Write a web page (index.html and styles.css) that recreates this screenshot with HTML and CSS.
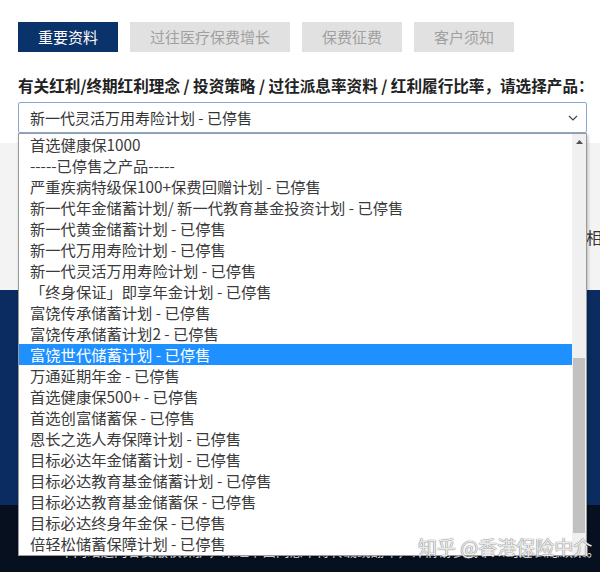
FILE: index.html
```html
<!DOCTYPE html>
<html>

<head>
    <title>重要资料</title>
    <link rel="stylesheet" href="styles.css">
</head>

<body>

    <div class="page">
        <section class="top">
            <div class="tabs">
                <div class="tab active">重要资料</div>
                <div class="tab">过往医疗保费增长</div>
                <div class="tab">保费征费</div>
                <div class="tab">客户须知</div>
            </div>

            <h3 class="heading">有关红利/终期红利理念 / 投资策略 / 过往派息率资料 / 红利履行比率，请选择产品：</h3>

            <div class="picker">
                <div class="select">
                    <span>新一代灵活万用寿险计划 - 已停售</span>
                    <svg class="chevron" width="10" height="6" viewBox="0 0 10 6">
                        <path d="M1 1 L5 5 L9 1" fill="none" stroke="#444" stroke-width="1.2"/>
                    </svg>
                </div>

                <div class="dropdown">
                    <ul class="options">
                        <li>首选健康保1000</li>
                        <li>-----已停售之产品-----</li>
                        <li>严重疾病特级保100+保费回赠计划 - 已停售</li>
                        <li>新一代年金储蓄计划/ 新一代教育基金投资计划 - 已停售</li>
                        <li>新一代黄金储蓄计划 - 已停售</li>
                        <li>新一代万用寿险计划 - 已停售</li>
                        <li>新一代灵活万用寿险计划 - 已停售</li>
                        <li>「终身保证」即享年金计划 - 已停售</li>
                        <li>富饶传承储蓄计划 - 已停售</li>
                        <li>富饶传承储蓄计划2 - 已停售</li>
                        <li class="selected">富饶世代储蓄计划 - 已停售</li>
                        <li>万通延期年金 - 已停售</li>
                        <li>首选健康保500+ - 已停售</li>
                        <li>首选创富储蓄保 - 已停售</li>
                        <li>恩长之选人寿保障计划 - 已停售</li>
                        <li>目标必达年金储蓄计划 - 已停售</li>
                        <li>目标必达教育基金储蓄计划 - 已停售</li>
                        <li>目标必达教育基金储蓄保 - 已停售</li>
                        <li>目标必达终身年金保 - 已停售</li>
                        <li>倍轻松储蓄保障计划 - 已停售</li>
                    </ul>
                    <div class="scrollbar">
                        <svg class="arrow" width="7" height="4" viewBox="0 0 7 4">
                            <path d="M0 4 L3.5 0 L7 4 Z" fill="#505050"/>
                        </svg>
                        <div class="thumb"></div>
                    </div>
                </div>
            </div>
        </section>

        <section class="note">
            <p>本网页所载资料只供参考之用，并不构成任何投资建议。如欲了解详情，请参阅相关产品说明书。</p>
        </section>

        <section class="band"></section>

        <footer class="foot">
            <p>本网站之内容受版权保护，未经书面同意不得转载或翻印，详情请参阅本公司之私隐政策。</p>
        </footer>

        <div class="watermark">知乎 @香港保险中介</div>
    </div>

</body>

</html>
```

FILE: styles.css
```css
body {
    margin: 0;
    background-color: #fff;
    font-family: "Noto Sans CJK SC", "Noto Sans", sans-serif;
    color: #333;
}

.page {
    position: relative;
    width: 600px;
    overflow: hidden;
}

.top {
    padding: 22px 13px 10px 18px;
    background-color: #fff;
}

.tabs {
    display: flex;
    gap: 12px;
}

.tab {
    height: 30px;
    line-height: 30px;
    padding: 0 20px;
    font-size: 15px;
    background-color: #e1e1e1;
    color: #a0a0a0;
}

.tab.active {
    background-color: #0b336b;
    color: #fff;
}

.heading {
    margin: 22px 0 0;
    font-size: 15.6px;
    line-height: 22px;
    font-weight: bold;
    color: #222;
    white-space: nowrap;
}

.picker {
    position: relative;
    margin-top: 6px;
}

.select {
    display: flex;
    align-items: center;
    justify-content: space-between;
    height: 29px;
    padding: 0 8px 0 11px;
    border: 1px solid #86a9d6;
    border-radius: 2px;
    font-size: 15px;
}

.dropdown {
    position: absolute;
    top: 31px;
    left: 0;
    width: 567px;
    height: 421px;
    display: flex;
    background-color: #fff;
    border: 1px solid #9a9a9a;
    box-shadow: 1px 2px 3px rgba(0, 0, 0, 0.25);
    z-index: 2;
}

.options {
    flex: 1;
    margin: 0;
    padding: 0;
    list-style: none;
}

.options li {
    height: 21px;
    line-height: 21px;
    padding-left: 11px;
    font-size: 15.3px;
    color: #3a3a3a;
    white-space: nowrap;
}

.options li.selected {
    background-color: #1e90ff;
    color: #fff;
}

.scrollbar {
    position: relative;
    width: 14px;
    background-color: #f0f0f0;
}

.arrow {
    position: absolute;
    top: 6px;
    left: 4px;
}

.thumb {
    position: absolute;
    top: 224px;
    left: 1px;
    width: 12px;
    height: 175px;
    background-color: #c1c1c1;
}

.note {
    height: 147px;
    background-color: #f3f3f3;
}

.note p {
    margin: 0;
    padding: 83px 0 0 26px;
    font-size: 16px;
    line-height: 22px;
    color: #333;
    white-space: nowrap;
}

.band {
    height: 215px;
    background-color: #0b2c60;
}

.foot {
    display: flex;
    justify-content: flex-end;
    height: 80px;
    background-color: #06101f;
}

.foot p {
    flex-shrink: 0;
    margin: 0;
    padding-top: 38px;
    font-size: 13.5px;
    line-height: 14px;
    color: #fff;
    white-space: nowrap;
}

.watermark {
    position: absolute;
    top: 535px;
    left: 418px;
    font-size: 19px;
    line-height: 24px;
    color: rgba(255, 255, 255, 0.85);
    text-shadow: 0 0 1px #777, 0 0 1px #777;
    z-index: 3;
}
```
